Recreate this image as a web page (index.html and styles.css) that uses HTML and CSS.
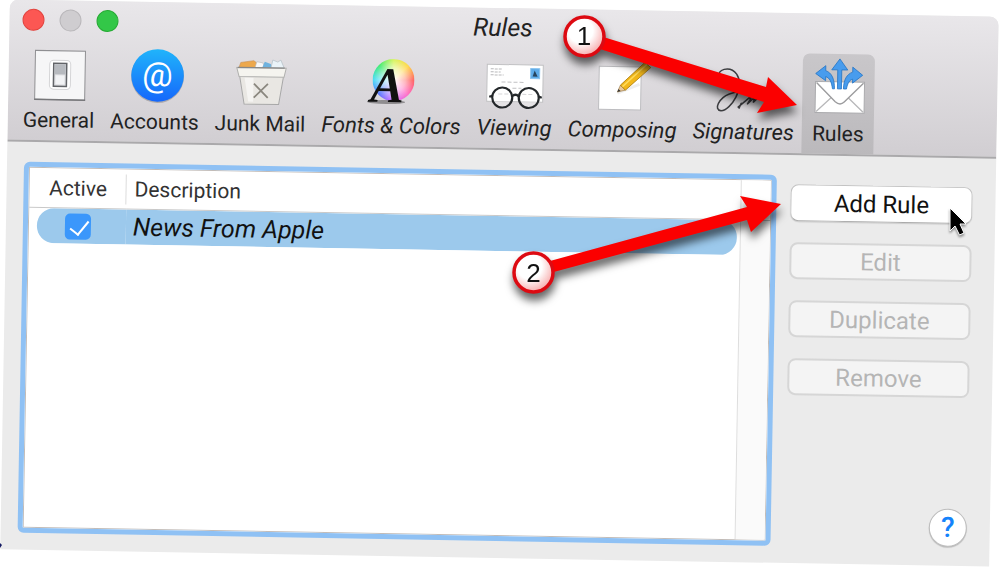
FILE: index.html
```html
<!DOCTYPE html>
<html lang="en">
<head>
<meta charset="utf-8">
<meta name="viewport" content="width=device-width, initial-scale=1">
<title>Rules</title>
<link rel="stylesheet" href="styles.css">
</head>
<body>
<main class="window">
  <header class="chrome">
    <div class="titlebar">
      <div class="lights">
        <button class="light light-close" aria-label="Close"></button>
        <button class="light light-min" aria-label="Minimize"></button>
        <button class="light light-zoom" aria-label="Zoom"></button>
      </div>
      <h1 class="title">Rules</h1>
    </div>
    <nav class="toolbar">
      <button class="tab">
        <svg class="icon" viewBox="0 0 60 50">
          <rect x="5.500" y="0.500" width="50" height="49" fill="#f6f6f7" stroke="#8f8f92"/>
          <path d="M5 49.500H56" stroke="#77777a" stroke-width="1.500"/>
          <rect x="20" y="10" width="21" height="29" rx="4" fill="#fff" stroke="#d5d5d7"/>
          <rect x="24" y="13" width="13" height="23" fill="#dcdde0" stroke="#626468" stroke-width="1.500"/>
          <rect x="25" y="14" width="11" height="10" fill="#b7babf"/>
          <rect x="26" y="25" width="9" height="9" fill="#f2f3f5"/>
        </svg>
        <span>General</span>
      </button>
      <button class="tab">
        <svg class="icon" viewBox="0 0 60 50">
          <defs><linearGradient id="blue" x1="0" y1="0" x2="0" y2="1"><stop offset="0" stop-color="#20b4fb"/><stop offset="1" stop-color="#1567fb"/></linearGradient></defs>
          <circle cx="32" cy="24.500" r="26.500" fill="#0003"/>
          <circle cx="32" cy="23.500" r="26.300" fill="url(#blue)"/>
          <text class="at" x="32" y="34" text-anchor="middle">@</text>
        </svg>
        <span>Accounts</span>
      </button>
      <button class="tab">
        <svg class="icon" viewBox="0 0 60 50">
          <path d="M8 15l2-6 13-2 4 3-1 6z" fill="#eda84c" stroke="#c99050" stroke-width=".6"/>
          <path d="M24 15l2-7 6 1 3 6z" fill="#f8f8f8" stroke="#b5b5b5" stroke-width=".6"/>
          <path d="M31 15l3-7 6 2 2 5z" fill="#6fb2de"/>
          <path d="M40 15l2-9 5 2 3-2 4 9z" fill="#eaf3f8" stroke="#b1bdc5" stroke-width=".7"/>
          <path d="M9 22l5 28.500H48.500L53 22z" fill="#e9e7e3" stroke="#a8a8a8"/>
          <path d="M14 24l4 24h5V24z" fill="#fff8"/>
          <path d="M6 14H55.500L53.500 23H8.500z" fill="#f5f4ef" stroke="#b0b0ae"/>
          <path d="M7 14H54" stroke="#878787" stroke-width="1.300"/>
          <path d="M23.500 30l14 14M37.500 30l-14 14" stroke="#8a877f" stroke-width="1.800"/>
        </svg>
        <span>Junk Mail</span>
      </button>
      <button class="tab slant">
        <span class="wheel">
          <svg class="icon" viewBox="0 0 60 50">
            <ellipse cx="25" cy="46" rx="19" ry="2" fill="#0005"/>
            <text class="letter" x="9" y="46">A</text>
          </svg>
        </span>
        <span>Fonts &amp; Colors</span>
      </button>
      <button class="tab slant">
        <svg class="icon" viewBox="0 0 60 50">
          <rect x="2.500" y="6.500" width="56" height="37" fill="#fff" stroke="#c1c1c3"/>
          <path d="M6 11h12M6 14h10M6 17h13" stroke="#b8b8ba" stroke-dasharray="3 1"/>
          <path d="M17 24h23M28 30h9M14 36h35" stroke="#c1c1c4" stroke-dasharray="4 2"/>
          <rect x="46" y="10" width="9" height="10" fill="#5dabe8" stroke="#8bc4ef"/>
          <path d="M48 18l2-6 3 6z" fill="#27455f"/>
          <g fill="#fff5" stroke="#24282b" stroke-width="2.200"><circle cx="18" cy="39.500" r="10"/><circle cx="44.500" cy="39.500" r="10"/><path d="M28 38q3-3 6.500 0M8 38l-3 1M54.500 38l3 1" fill="none"/></g>
        </svg>
        <span>Viewing</span>
      </button>
      <button class="tab slant">
        <svg class="icon" viewBox="0 0 60 50">
          <rect x="6.500" y="6.500" width="42" height="43" fill="#fff" stroke="#bdbdc0"/>
          <path d="M25 33l22-9" stroke="#0001" stroke-width="3"/>
          <path d="M25 32l3-7 5 5z" fill="#e8c79a" stroke="#8f713e" stroke-width=".6"/>
          <path d="M25 32l1.200-3 2 2z" fill="#333"/>
          <path d="M28 25L52 2l6 5L33 30z" fill="#f2b71a" stroke="#a87908" stroke-width=".8"/>
          <path d="M30 26.500L54 4" stroke="#ffdb5a" stroke-width="1.500"/>
        </svg>
        <span>Composing</span>
      </button>
      <button class="tab slant">
        <svg class="icon" viewBox="0 0 60 50" fill="none" stroke="#3c3d40" stroke-width="1.500" stroke-linecap="round">
          <path d="M5 15C1 8 15 3 22 12C31 25 17 48 7 49C-1 48 5 36 15 32C26 28 31 27 37 26"/>
          <path d="M5 15C8 23 18 27 29 28"/>
          <path d="M24 45l15-13-6 10 8-8-2 6 8-8 3-2 8-5M25 46l2-5"/>
        </svg>
        <span>Signatures</span>
      </button>
      <button class="tab selected" aria-current="page">
        <svg class="icon" viewBox="0 0 60 50">
          <rect x="7" y="18" width="49" height="31" fill="#fff" stroke="#aaaaad"/>
          <path d="M8 48l18-17M55 48L37 31" stroke="#b8b8ba" stroke-width="1.300" fill="none"/>
          <path d="M8 19l19 19q5 4 9 0L55 19" stroke="#9c9c9e" stroke-width="1.400" fill="#fff"/>
          <g fill="#489ced" stroke="#2374c5" stroke-width=".8" stroke-linejoin="round">
            <path d="M29 25V6h-6l8-11 8 11h-6v19z"/>
            <path d="M24 25C23 18 21 14 17 13v4L7 10l10-8v5c6 2 9 8 9 18z"/>
            <path d="M38 25c1-6 3-9 6-10v4l10-8-10-8v5c-6 2-9 8-9 17z"/>
          </g>
        </svg>
        <span>Rules</span>
      </button>
    </nav>
  </header>

  <section class="content">
    <div class="list">
      <table class="rules">
        <thead><tr><th class="col-active">Active</th><th class="col-desc">Description</th></tr></thead>
        <tbody>
          <tr>
            <td class="cell-check"><input class="check" type="checkbox" id="news" checked></td>
            <td class="cell-desc"><label for="news">News From Apple</label></td>
          </tr>
        </tbody>
      </table>
      <div class="scroller"></div>
    </div>
    <aside class="actions">
      <button class="action">Add Rule</button>
      <button class="action" disabled>Edit</button>
      <button class="action" disabled>Duplicate</button>
      <button class="action" disabled>Remove</button>
      <button class="help" aria-label="Help">?</button>
    </aside>
  </section>
</main>

<svg class="callouts" viewBox="0 0 1000 568" width="1000" height="568">
  <defs>
    <radialGradient id="badge" cx=".4" cy=".35" r=".7"><stop offset=".45" stop-color="#fff"/><stop offset="1" stop-color="#f6a3a3"/></radialGradient>
  </defs>
  <g class="callout">
    <path d="M600 36L766 87 768 77 797 105 757 113 764 102 600 49z" fill="#fb0000"/>
    <circle cx="584.500" cy="36.500" r="19.500" fill="url(#badge)" stroke="#dd0a12" stroke-width="3.500"/>
    <text x="584" y="45" text-anchor="middle">1</text>
  </g>
  <g class="callout">
    <path d="M550 261L747 207 740 196 781 204 751 232 747 220 550 273z" fill="#fb0000"/>
    <circle cx="533.500" cy="272.500" r="19.500" fill="url(#badge)" stroke="#dd0a12" stroke-width="3.500"/>
    <text x="533.500" y="282" text-anchor="middle">2</text>
  </g>
  <path class="pointer" d="M950 208V231L955 226 959.500 235 964 233 960 224H966z"/>
  <path d="M0 543l2 2-2 3z" fill="#151a63"/>
</svg>
</body>
</html>
```
FILE: styles.css
```css
* { box-sizing: border-box; }

body {
  position: relative;
  min-height: 100vh;
  margin: 0;
  padding: 8px 6px 10px 5px;
  display: flex;
  overflow: hidden;
  background: #fff;
  color: #222;
  font-family: Roboto, "Liberation Sans", sans-serif;
}

button {
  margin: 0;
  padding: 0;
  border: 0;
  background: none;
  color: inherit;
  font: inherit;
}

/* The whole window is tilted a little */
.window {
  flex: 1;
  display: flex;
  flex-direction: column;
  border-radius: 9px 9px 0 0;
  background: #ebebeb;
  overflow: hidden;
  transform: rotate(1deg);
}

.chrome {
  border-bottom: 2px solid #aaa9ab;
  background: linear-gradient(#e9e7ea, #d1ced2);
}

.titlebar {
  display: grid;
  grid-template-columns: 1fr auto 1fr;
  align-items: center;
  height: 40px;
  padding: 0 15px 0 13px;
}

.lights { display: flex; gap: 15px; }

.light {
  width: 22px;
  height: 22px;
  border: 1px solid #e2443f;
  border-radius: 50%;
  background: #fc5753;
}
.light-min { border-color: #b9b7ba; background: #cfcdd0; }
.light-zoom { border-color: #27ab35; background: #33c748; }

.title {
  margin: 0;
  font-size: 25px;
  font-weight: 400;
  font-style: italic;
  line-height: 40px;
}

.toolbar {
  display: flex;
  gap: 16px;
  padding-left: 15px;
}

.tab {
  display: flex;
  flex-direction: column;
  align-items: center;
  gap: 8px;
  padding: 10px 0 8px;
  font-size: 21px;
  line-height: 24px;
  white-space: nowrap;
}
.slant { font-size: 22px; font-style: italic; }

.selected {
  margin-left: -8px;
  padding-right: 10px;
  padding-left: 10px;
  border-radius: 7px 7px 0 0;
  background: linear-gradient(#c9c7ca, #bbb9bc);
}

.selected .icon { margin: 0 -4px; }

.icon {
  display: block;
  width: 60px;
  height: 50px;
  overflow: visible;
}

.at { fill: #fff; font: 34px Roboto, sans-serif; }

.wheel {
  position: relative;
  width: 60px;
  height: 50px;
}
.wheel::before {
  content: "";
  position: absolute;
  top: 3px;
  left: 11px;
  width: 42px;
  height: 42px;
  border-radius: 50%;
  background:
    radial-gradient(circle, #fff 0, #fff8 40%, #fff0 68%),
    conic-gradient(#d9f562, #ffd84f, #ff6464, #ff70c8, #d572ff, #5c78ff, #4bdcf5, #46ec74, #d9f562);
}
.wheel .icon { position: relative; }
.letter { fill: #111; font: italic bold 50px "Liberation Serif", serif; }

.content {
  flex: 1;
  display: flex;
  gap: 14px;
  padding: 20px 23px 17px 17px;
}

.list {
  flex: 1;
  display: grid;
  grid-template-columns: 1fr 30px;
  padding: 1px;
  border: 5px solid #8fc1f4;
  border-radius: 6px;
  background: #fff;
  box-shadow: inset 0 0 0 1px #c2bcb8;
}

.rules {
  align-self: start;
  width: 100%;
  border-spacing: 0;
  table-layout: fixed;
}

th {
  height: 40px;
  padding: 0;
  border-bottom: 1px solid #c9c9c9;
  color: #333;
  font-size: 21px;
  font-weight: 400;
  line-height: 24px;
}
.col-active {
  width: 97px;
  background: linear-gradient(#dcdcdc, #dcdcdc) right center / 1px 30px no-repeat;
}
.col-desc { padding-left: 8px; text-align: left; }

tbody tr {
  background: #9cc9ec;
  clip-path: inset(0 3px 0 8px round 17px);
}

td { height: 35px; padding: 0; }
.cell-desc {
  padding-left: 7px;
  color: #111;
  font-size: 25px;
  font-style: italic;
  line-height: 28px;
}

.check {
  appearance: none;
  display: block;
  width: 26px;
  height: 26px;
  margin: 0 auto;
  border-radius: 5px;
  background: #3b97fb;
}
.check:checked::after {
  content: "";
  display: block;
  width: 9px;
  height: 16px;
  margin: 3px 0 0 9px;
  border: solid #fff;
  border-width: 0 2px 2px 0;
  transform: rotate(38deg);
}

.scroller {
  border-left: 1px solid #dedede;
  background: linear-gradient(#fff 39px, #c9c9c9 39px, #c9c9c9 40px, #fafafa 40px);
}

.actions {
  display: flex;
  flex-direction: column;
  gap: 21px;
  width: 182px;
  padding: 9px 0 2px;
}

.action {
  height: 37px;
  border: 1px solid #c3c3c3;
  border-bottom-color: #aaa;
  border-radius: 8px;
  background: #fff;
  box-shadow: 0 1px 1px #0002;
  color: #111;
  font-size: 24px;
  line-height: 28px;
}
.action:disabled {
  border: 2px solid #d6d6d6;
  background: #f4f4f4;
  box-shadow: none;
  color: #b5b5b5;
}

.help {
  align-self: flex-end;
  width: 38px;
  height: 38px;
  margin-top: auto;
  border: 1px solid #bdbdbd;
  border-radius: 50%;
  background: #fff;
  box-shadow: 0 1px 1px #0003;
  color: #1583fb;
  font-size: 28px;
  font-weight: 500;
  line-height: 32px;
}

.callouts {
  position: absolute;
  top: 0;
  left: 0;
  pointer-events: none;
}
.callout { filter: drop-shadow(1px 7px 4px #0009); }
.callout text { fill: #111; font: 26px "Liberation Sans", sans-serif; }
.pointer {
  fill: #000;
  stroke: #fff;
  stroke-width: 1;
  filter: drop-shadow(0 2px 1px #0006);
}
```
